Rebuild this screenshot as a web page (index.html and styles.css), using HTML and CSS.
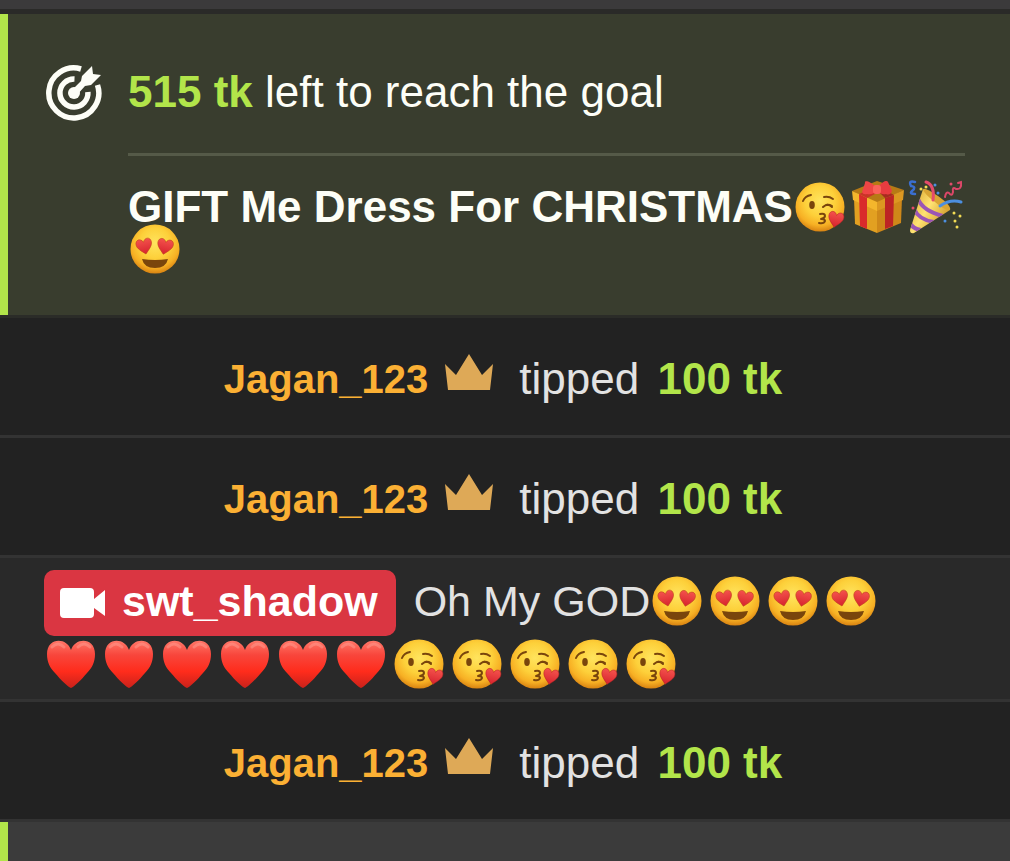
FILE: index.html
```html
<!DOCTYPE html>
<html lang="en">
<head>
   <meta charset="UTF-8">
   <meta name="viewport" content="width=device-width, initial-scale=1.0">
   <title>Room chat</title>
   <link rel="stylesheet" href="styles.css">
</head>
<body>
   <!-- shared emoji and icon shapes -->
   <svg class="sprite" aria-hidden="true">
      <defs>
         <radialGradient id="face" cx="50%" cy="38%" r="62%">
            <stop offset="0" stop-color="#ffe45e"/>
            <stop offset="0.5" stop-color="#fdd03a"/>
            <stop offset="0.8" stop-color="#f7b024"/>
            <stop offset="1" stop-color="#d88312"/>
         </radialGradient>
         <linearGradient id="red" x1="0" y1="0" x2="0" y2="1">
            <stop offset="0" stop-color="#ff7768"/>
            <stop offset="0.3" stop-color="#f8463c"/>
            <stop offset="0.65" stop-color="#ff2c1c"/>
            <stop offset="1" stop-color="#c9221b"/>
         </linearGradient>
         <linearGradient id="pink" x1="0" y1="0" x2="0" y2="1">
            <stop offset="0" stop-color="#f4524c"/>
            <stop offset="1" stop-color="#d6232e"/>
         </linearGradient>
         <linearGradient id="cone" x1="0" y1="0" x2="1" y2="0.7">
            <stop offset="0" stop-color="#d39a22"/>
            <stop offset="0.5" stop-color="#ffe372"/>
            <stop offset="1" stop-color="#c98d1f"/>
         </linearGradient>
         <clipPath id="cone-clip">
            <path d="M14 3L41 24L5 47Q1 48 1 44Z"/>
         </clipPath>
         <path id="small-heart" d="M8 16C4 12 0 9 0 5C0 0 6 -1 8 4C10 -1 16 0 16 5C16 9 12 12 8 16Z"/>
      </defs>
      <symbol id="kiss" viewBox="0 0 58 42" overflow="visible">
         <circle cx="27" cy="21" r="24.5" fill="url(#face)"/>
         <g fill="none" stroke="#79450c" stroke-width="2" stroke-linecap="round" stroke-linejoin="round">
            <path d="M10 15Q12 10 18 9"/>
            <path d="M31 11Q36 10 40 13"/>
            <path d="M30 21Q34 17 39 20M33 19Q36 18 39 21"/>
            <path d="M27 28Q32 27 32 30Q32 32 28 33Q32 33 32 35Q31 38 26 37"/>
         </g>
         <ellipse cx="19" cy="19" rx="2.8" ry="4" fill="#79450c"/>
         <use href="#small-heart" transform="translate(37 24) rotate(12) scale(0.95 1)" fill="url(#pink)" stroke="#b52222" stroke-width="0.5"/>
      </symbol>
      <symbol id="love" viewBox="0 0 58 42" overflow="visible">
         <circle cx="27" cy="21" r="24.5" fill="url(#face)"/>
         <use href="#small-heart" transform="translate(7 12) rotate(-12) scale(0.98 1)" fill="url(#pink)" stroke="#c2471c" stroke-width="0.6"/>
         <use href="#small-heart" transform="translate(31 9) rotate(12) scale(0.98 1)" fill="url(#pink)" stroke="#c2471c" stroke-width="0.6"/>
         <path d="M14 31Q27 33 40 31Q38 40 27 40Q16 40 14 31Z" fill="#79450c"/>
      </symbol>
      <symbol id="heart" viewBox="0 0 58 42" overflow="visible">
         <path d="M27 45C25 45 16 36 11 30C6 25 3 19 3 11C3 -6 23 -6 27 7C31 -6 51 -6 51 11C51 19 48 25 43 30C38 36 29 45 27 45Z" fill="url(#red)"/>
         <path d="M8 4Q14 -2 20 4M34 4Q40 -2 46 4" fill="none" stroke="#ffaaa0" stroke-width="3" stroke-linecap="round" opacity="0.4"/>
      </symbol>
      <symbol id="gift" viewBox="0 0 58 42" overflow="visible">
         <path d="M3 12L26 21V47L4 38Z" fill="#e2a021"/>
         <path d="M26 21L51 12L50 37L26 47Z" fill="#cf8819"/>
         <path d="M1 5L26 -5L53 4L26 18Z" fill="#b77a15"/>
         <path d="M1 5L26 16V25L2 14Z" fill="#f4b62c"/>
         <path d="M26 16L53 4L52 14L26 25Z" fill="#dc9821"/>
         <path d="M8 8L16 12V43L9 40Z" fill="#d92b2b"/>
         <path d="M34 12L43 9L42 40L34 43Z" fill="#bd2424"/>
         <path d="M8 8L20 3L28 6L16 12Z" fill="#c93428"/>
         <path d="M43 9L34 4L28 6L34 12Z" fill="#a82b20"/>
         <path d="M25 1C19 -5 13 -6 14 -3L11 6Q12 9 16 8Q22 9 25 5Z" fill="#ef4545"/>
         <path d="M27 1C32 -5 36 -6 37 -4L41 5Q39 10 35 8Q30 9 27 5Z" fill="#e83c40"/>
         <rect x="22" y="-1" width="8" height="9" rx="3" fill="#fa6259"/>
      </symbol>
      <symbol id="party" viewBox="0 0 58 42" overflow="visible">
         <path d="M14 3L41 24L5 47Q1 48 1 44Z" fill="url(#cone)"/>
         <path d="M14 3Q16 1 29 10Q43 20 41 24Q36 25 26 16Q15 8 14 3Z" fill="#d9a534"/>
         <g clip-path="url(#cone-clip)" fill="none" stroke="#9b55b5" stroke-width="4">
            <path d="M9 13Q14 25 34 30"/>
            <path d="M5 23Q10 34 25 36"/>
            <path d="M1 37Q4 43 12 44"/>
         </g>
         <g fill="none" stroke-linecap="round" stroke-width="2.500">
            <path d="M24 14Q26 -1 17 -4" stroke="#e44b6b" stroke-width="3"/>
            <path d="M31 20Q41 13 52 16" stroke="#4c8fe0" stroke-width="3"/>
            <path d="M36 11Q37 5 40 7Q43 11 44 6Q43 0 47 3Q53 4 52 -4L49 -3" stroke="#dc4768" stroke-width="2"/>
            <path d="M6 -4Q-1 -6 2 0Q8 1 3 5Q0 8 6 8" stroke="#3a6fd0"/>
         </g>
         <g fill="#f3dc54">
            <circle cx="12" cy="3" r="1.500"/>
            <circle cx="17" cy="1" r="1.500"/>
            <circle cx="45" cy="27" r="1.500"/>
            <circle cx="51" cy="30" r="1.500"/>
            <circle cx="46" cy="35" r="1.500"/>
            <circle cx="48" cy="41" r="1.500"/>
         </g>
         <g fill="#4c8fe0">
            <circle cx="26" cy="-1" r="1.500"/>
            <circle cx="29" cy="7" r="1.500"/>
            <circle cx="36" cy="35" r="1.500"/>
         </g>
         <circle cx="42" cy="-2" r="1.500" fill="#e44b6b"/>
         <circle cx="4" cy="22" r="1.500" fill="#e44b6b"/>
      </symbol>
      <symbol id="crown" viewBox="0 0 50 36">
         <path d="M1 10L12 21L25 0L38 21L49 10L46 36H4Z" fill="#dea957"/>
      </symbol>
   </svg>

   <main class="chat">
      <div class="top-strip"></div>

      <section class="goal">
         <svg class="goal-icon" viewBox="0 0 56 56" aria-hidden="true">
            <g fill="none" stroke="#fdfef7" stroke-width="5.500">
               <path d="M35 4A25 25 0 1 0 51.500 20"/>
               <path d="M28.500 14A14 14 0 1 0 41.900 27"/>
            </g>
            <circle cx="28" cy="28" r="6" fill="#fdfef7"/>
            <path d="M25 26L35 16L36 11L46 1L47 9L55 10L45 20L39 21L30 31Z" fill="#fdfef7"/>
         </svg>
         <div class="goal-body">
            <p class="goal-left"><strong class="tokens">515 tk</strong> left to reach the goal</p>
            <hr class="goal-line">
            <h1 class="goal-title">GIFT Me Dress For CHRISTMAS<svg class="emoji" role="img" aria-label="kiss"><use href="#kiss"/></svg><svg class="emoji" role="img" aria-label="gift"><use href="#gift"/></svg><svg class="emoji" role="img" aria-label="party"><use href="#party"/></svg><svg class="emoji" role="img" aria-label="heart eyes"><use href="#love"/></svg></h1>
         </div>
      </section>

      <div class="tip">
         <strong class="user">Jagan_123</strong>
         <svg class="crown" aria-hidden="true"><use href="#crown"/></svg>
         <span>tipped <strong class="tokens">100 tk</strong></span>
      </div>

      <div class="tip">
         <strong class="user">Jagan_123</strong>
         <svg class="crown" aria-hidden="true"><use href="#crown"/></svg>
         <span>tipped <strong class="tokens">100 tk</strong></span>
      </div>

      <div class="message">
         <strong class="model">
            <svg class="camera" viewBox="0 0 45 30" aria-hidden="true">
               <path d="M4 0H30Q34 0 34 4V11L45 2V28L34 20V26Q34 30 30 30H4Q0 30 0 26V4Q0 0 4 0Z" fill="#fff"/>
            </svg>
            swt_shadow
         </strong>
         <span class="text">Oh My GOD<svg class="emoji" role="img" aria-label="heart eyes"><use href="#love"/></svg><svg class="emoji" role="img" aria-label="heart eyes"><use href="#love"/></svg><svg class="emoji" role="img" aria-label="heart eyes"><use href="#love"/></svg><svg class="emoji" role="img" aria-label="heart eyes"><use href="#love"/></svg></span>
         <span class="emoji-row">
            <svg class="emoji" role="img" aria-label="heart"><use href="#heart"/></svg>
            <svg class="emoji" role="img" aria-label="heart"><use href="#heart"/></svg>
            <svg class="emoji" role="img" aria-label="heart"><use href="#heart"/></svg>
            <svg class="emoji" role="img" aria-label="heart"><use href="#heart"/></svg>
            <svg class="emoji" role="img" aria-label="heart"><use href="#heart"/></svg>
            <svg class="emoji" role="img" aria-label="heart"><use href="#heart"/></svg>
            <svg class="emoji" role="img" aria-label="kiss"><use href="#kiss"/></svg>
            <svg class="emoji" role="img" aria-label="kiss"><use href="#kiss"/></svg>
            <svg class="emoji" role="img" aria-label="kiss"><use href="#kiss"/></svg>
            <svg class="emoji" role="img" aria-label="kiss"><use href="#kiss"/></svg>
            <svg class="emoji" role="img" aria-label="kiss"><use href="#kiss"/></svg>
         </span>
      </div>

      <div class="tip">
         <strong class="user">Jagan_123</strong>
         <svg class="crown" aria-hidden="true"><use href="#crown"/></svg>
         <span>tipped <strong class="tokens">100 tk</strong></span>
      </div>

      <div class="notice"></div>
   </main>
</body>
</html>
```
FILE: styles.css
```css
* {
   box-sizing: border-box;
}
body {
   margin: 0;
   background-color: #3b3b3b;
   color: #e2e2e2;
   font-family: "Liberation Sans", Arial, sans-serif;
   font-size: 44px;
}
.sprite {
   position: absolute;
   width: 0;
   height: 0;
}
.chat {
   display: flex;
   flex-direction: column;
   min-height: 100vh;
}
.top-strip {
   height: 14px;
   background-color: #3b3a3b;
   border-bottom: 5px solid #2a2a28;
}
.tokens {
   color: #b2e54a;
}
.emoji {
   width: 58px;
   height: 42px;
   vertical-align: -6px;
   overflow: visible;
}

/* goal */
.goal {
   display: flex;
   padding: 51px 40px 45px 38px;
   background-color: #393d2e;
   border-left: 8px solid #b2e54a;
   color: #fdfef7;
}
.goal-icon {
   flex: none;
   width: 56px;
   height: 56px;
   margin-right: 26px;
}
.goal-body {
   flex: 1;
   padding-top: 2px;
}
.goal-left {
   margin: 0;
   line-height: 50px;
}
.goal-line {
   height: 3px;
   margin: 36px 5px 30px 0;
   border: none;
   background-color: #555a48;
}
.goal-title {
   margin: 0;
   font-size: 44px;
   line-height: 42px;
}

/* tips */
.tip {
   display: flex;
   align-items: center;
   justify-content: center;
   height: 120px;
   padding: 4px 4px 0 0;
   background-color: #222;
   border-bottom: 3px solid #333;
}
.goal + .tip {
   height: 123px;
   border-top: 3px solid #2b2c28;
}
.tip .tokens {
   margin-left: 6px;
}
.user {
   padding-top: 2px;
   font-size: 40px;
   color: #fbb034;
}
.crown {
   width: 50px;
   height: 36px;
   margin: 0 25px 14px 16px;
}

/* chat message */
.message {
   display: flex;
   flex-wrap: wrap;
   padding: 12px 44px 7px;
   background-color: #292929;
   border-bottom: 3px solid #333;
   font-size: 43px;
   line-height: 62px;
}
.model {
   display: flex;
   align-items: center;
   gap: 17px;
   padding: 0 18px 4px 16px;
   border-radius: 10px;
   background-color: #da3642;
   color: #fff;
}
.camera {
   width: 45px;
   height: 30px;
   margin-top: 4px;
}
.text {
   margin-left: 18px;
}
.emoji-row {
   display: flex;
   align-items: center;
   height: 56px;
}

.notice {
   flex: 1;
   min-height: 39px;
   background-color: #3b3b3b;
   border-left: 8px solid #b2e54a;
}
```
